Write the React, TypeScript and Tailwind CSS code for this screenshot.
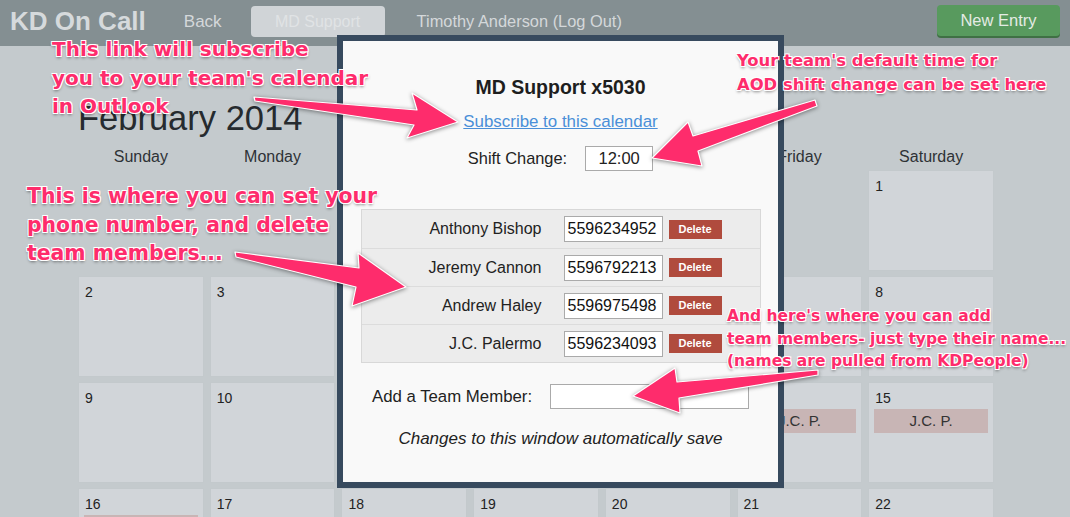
import React from "react";

const weeks: (number | null)[][] = [
  [null, null, null, null, null, null, 1],
  [2, 3, 4, 5, 6, 7, 8],
  [9, 10, 11, 12, 13, 14, 15],
  [16, 17, 18, 19, 20, 21, 22],
  [23, 24, 25, 26, 27, 28, null],
];
const events: Record<number, string> = { 13: "J.C. P.", 14: "J.C. P.", 15: "J.C. P.", 16: "J.C. P." };
const days = ["Sunday", "Monday", "Tuesday", "Wednesday", "Thursday", "Friday", "Saturday"];
const members = [
  ["Anthony Bishop", "5596234952"],
  ["Jeremy Cannon", "5596792213"],
  ["Andrew Haley", "5596975498"],
  ["J.C. Palermo", "5596234093"],
];

const note =
  "absolute font-bold font-['DejaVu_Sans',Verdana,sans-serif] text-[#fe2c6c] whitespace-nowrap [text-shadow:-1px_-1px_0_#fff,1px_-1px_0_#fff,-1px_1px_0_#fff,1px_1px_0_#fff,0_2px_3px_rgba(0,0,0,0.45)]";

export default function App() {
  return (
    <div className="relative w-[1070px] h-[517px] overflow-hidden bg-[#c4cacd] font-['Liberation_Sans',Arial,sans-serif]">
      {/* Navbar */}
      <div className="h-[46px] bg-[#848f92] flex items-start pt-[6px] pl-[10px] pr-[10px]">
        <div className="h-[31px] flex items-center text-[26px] font-bold text-[#d6dadc]">KD On Call</div>
        <div className="h-[31px] flex items-center ml-[38px] text-[17px] text-[#d4d8da]">Back</div>
        <div className="h-[31px] w-[134px] ml-[29px] rounded-[4px] bg-[#d0d4d7] flex items-center justify-center text-[16px] text-[#e0e3e5]">MD Support</div>
        <div className="h-[31px] flex items-center ml-[32px] text-[16.4px] text-[#d4d8da]">Timothy Anderson (Log Out)</div>
        <div className="flex-1" />
        <div className="-mt-[1px] h-[31px] w-[123px] rounded-[4px] bg-[#589a5e] shadow-[0_2px_0_#3f7044] flex items-center justify-center text-[16.5px] text-[#e4ebe4]">New Entry</div>
      </div>

      {/* Calendar */}
      <div className="ml-[78px] w-[916px]">
        <div className="mt-[52px] h-[40px] flex items-center text-[34.5px] leading-none text-[#262b2f]">February 2014</div>
        <div className="mt-[10px] grid grid-cols-7 gap-x-[6px] h-[18px]">
          {days.map((d) => (
            <div key={d} className="text-center text-[16px] leading-[18px] text-[#2e3236]">{d}</div>
          ))}
        </div>
        <div className="mt-[4px] grid grid-cols-7 gap-x-[6px] gap-y-[5px] auto-rows-[101px]">
          {weeks.flat().map((n, i) =>
            n === null ? (
              <div key={i} />
            ) : (
              <div key={i} className="border border-[#c3c9cc] bg-[#d1d5d9] px-[5px] pt-[7px]">
                <div className="pl-[1px] text-[14px] leading-[16px] text-[#222]">{n}</div>
                {events[n] && (
                  <div className="mt-[3px] h-[24px] bg-[#c8b5b5] flex items-center justify-center text-[15px] text-[#333]">{events[n]}</div>
                )}
              </div>
            )
          )}
        </div>
      </div>

      {/* Modal */}
      <div className="absolute left-[337px] top-[35px] w-[447px] h-[453px] border-[6px] border-[#374a5e] bg-[#f9f9f9] flex flex-col items-center text-[#222]">
        <div className="mt-[35px] text-[19.5px] leading-[22px] font-bold text-[#1e1e1e]">MD Support x5030</div>
        <div className="mt-[15px] text-[16.9px] leading-[18px] text-[#4a8fd8] underline">Subscribe to this calendar</div>
        <div className="mt-[15px] flex items-center gap-[18px] h-[25px]">
          <span className="text-[16.4px]">Shift Change:</span>
          <div className="w-[68px] h-[25px] border border-[#aaa] bg-white flex items-center justify-center text-[16.5px]">12:00</div>
        </div>
        <div className="mt-[38px] w-[400px] border border-[#d8d8d8] bg-[#ececec]">
          {members.map(([name, phone], i) => (
            <div key={name} className={`h-[38px] flex items-center ${i > 0 ? "border-t border-[#dcdcdc]" : ""}`}>
              <div className="w-[180px] text-right text-[16px] text-[#222]">{name}</div>
              <div className="ml-[22px] w-[99px] h-[26px] border border-[#aaa] bg-white flex items-center pl-[3px] text-[16px] text-[#111]">{phone}</div>
              <div className="ml-[6px] w-[53px] h-[19px] bg-[#b04b3d] flex items-center justify-center text-[11px] font-bold text-white">Delete</div>
            </div>
          ))}
        </div>
        <div className="mt-[21px] flex items-center gap-[18px] h-[25px]">
          <span className="text-[16.8px]">Add a Team Member:</span>
          <div className="w-[199px] h-[25px] border border-[#aaa] bg-white" />
        </div>
        <div className="mt-[21px] text-[17px] leading-[18px] italic text-[#222]">Changes to this window automatically save</div>
      </div>

      {/* Arrows */}
      <svg className="absolute left-0 top-0 [filter:drop-shadow(0_1px_2px_rgba(0,0,0,0.45))]" width="1070" height="517">
        <g fill="#fe2c6c" stroke="#ffffff" strokeWidth="1.2" strokeLinejoin="round">
          <polygon points="254,97 417,110 412,93 458,122 407,138 414,125 255,101" />
          <polygon points="815,100 693,136 688,122 652,158 702,166 698,151 817,106" />
          <polygon points="235,252 359,268 358,253 406,287 352,306 356,287 236,257" />
          <polygon points="818,370 677,382 675,368 633,396 680,413 679,398 818,375" />
        </g>
      </svg>

      {/* Annotations */}
      <div className={`${note} left-[52px] top-[35px] text-[20px] leading-[28.5px]`}>
        This link will subscribe<br />you to your team's calendar<br />in Outlook
      </div>
      <div className={`${note} left-[737px] top-[49px] text-[16.4px] leading-[24px]`}>
        Your team's default time for<br />AOD shift change can be set here
      </div>
      <div className={`${note} left-[27px] top-[182px] text-[20.4px] leading-[28.5px]`}>
        This is where you can set your<br />phone number, and delete<br />team members...
      </div>
      <div className={`${note} left-[727px] top-[305px] text-[15.5px] leading-[22.5px]`}>
        And here's where you can add<br />team members- just type their name...<br />(names are pulled from KDPeople)
      </div>
    </div>
  );
}
